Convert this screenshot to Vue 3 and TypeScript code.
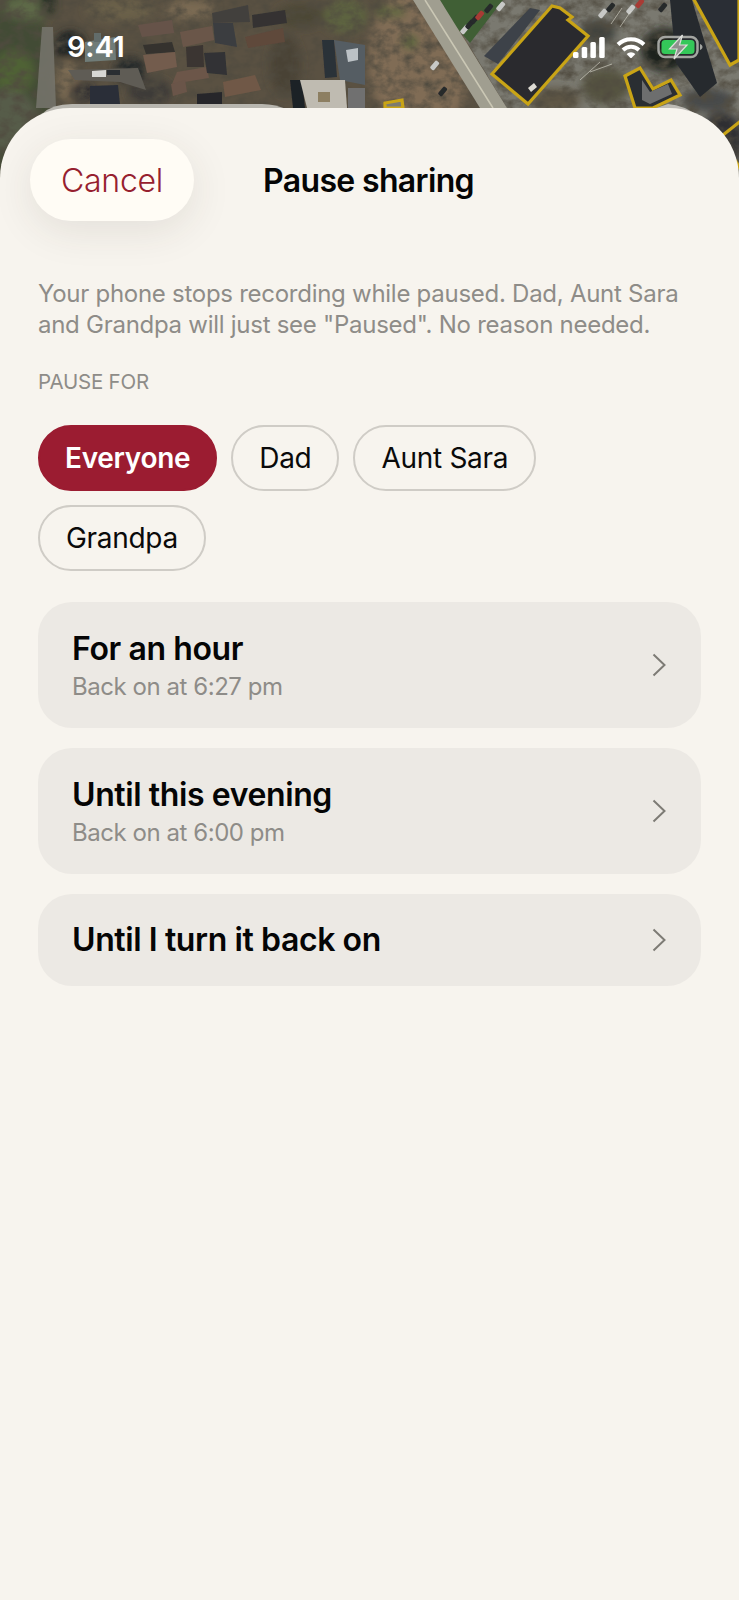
<script setup lang="ts">
/**
 * Pause sharing sheet on top of an aerial map
 */

interface Shape {
	points: string
	fill: string
}

interface Blob {
	x: number
	y: number
	rx: number
	ry: number
	fill: string
}

interface Option {
	title: string
	note?: string
}

// soft patches of trees, lawn and shadow
const blobs: Blob[] = [
	{ x: 18, y: 90, rx: 34, ry: 100, fill: '#434c36' },
	{ x: 30, y: 8, rx: 26, ry: 12, fill: '#5d6947' },
	{ x: 48, y: 2, rx: 8, ry: 14, fill: '#222a22' },
	{ x: 14, y: 72, rx: 20, ry: 22, fill: '#4f6236' },
	{ x: 8, y: 120, rx: 30, ry: 30, fill: '#565c48' },
	{ x: 70, y: 46, rx: 16, ry: 16, fill: '#1f2122' },
	{ x: 68, y: 80, rx: 12, ry: 22, fill: '#7a6a52' },
	{ x: 82, y: 92, rx: 12, ry: 9, fill: '#20222a' },
	{ x: 130, y: 70, rx: 16, ry: 14, fill: '#28292b' },
	{ x: 150, y: 92, rx: 22, ry: 14, fill: '#3c3a38' },
	{ x: 120, y: 10, rx: 34, ry: 12, fill: '#6a614a' },
	{ x: 190, y: 10, rx: 26, ry: 10, fill: '#7a6a52' },
	{ x: 345, y: 16, rx: 22, ry: 17, fill: '#5d6440' },
	{ x: 300, y: 16, rx: 24, ry: 12, fill: '#4c4636' },
	{ x: 285, y: 65, rx: 16, ry: 30, fill: '#4a4336' },
	{ x: 420, y: 60, rx: 52, ry: 75, fill: '#806c55' },
	{ x: 384, y: 12, rx: 7, ry: 6, fill: '#56653a' },
	{ x: 398, y: 12, rx: 7, ry: 5, fill: '#56653a' },
	{ x: 410, y: 42, rx: 8, ry: 7, fill: '#56653a' },
]

// the parking lot and the trees around it, also in soft patches
const lotPatches: Blob[] = [
	{ x: 598, y: 32, rx: 18, ry: 12, fill: '#3f423e' },
	{ x: 665, y: 50, rx: 24, ry: 22, fill: '#1f241c' },
	{ x: 606, y: 86, rx: 24, ry: 18, fill: '#55533f' },
	{ x: 555, y: 100, rx: 26, ry: 12, fill: '#5f5645' },
	{ x: 708, y: 100, rx: 26, ry: 12, fill: '#47484a' },
	{ x: 722, y: 140, rx: 22, ry: 28, fill: '#2d2f33' },
]

const roofs: Shape[] = [
	{ points: '85,42 115,37 116,60 85,62', fill: '#6f7c78' },
	{ points: '94,33 101,33 101,42 94,42', fill: '#626c6a' },
	{ points: '68,70 138,68 146,90 120,82 75,80', fill: '#5f5c55' },
	{ points: '92,71 106,70 106,77 92,77', fill: '#d7d7d4' },
	{ points: '107,70 120,70 120,75 107,75', fill: '#2c2e30' },
	{ points: '90,86 118,85 120,104 90,104', fill: '#2a2e37' },
	{ points: '138,25 172,20 174,33 142,37', fill: '#66534a' },
	{ points: '180,32 212,26 214,40 183,47', fill: '#6b564a' },
	{ points: '143,45 172,42 175,52 146,54', fill: '#34322f' },
	{ points: '143,55 175,52 177,67 147,73', fill: '#735b4d' },
	{ points: '177,72 207,67 209,78 172,84', fill: '#6c5649' },
	{ points: '171,84 185,80 187,92 173,96', fill: '#6b5548' },
	{ points: '223,82 255,75 261,90 225,97', fill: '#705846' },
	{ points: '245,37 283,28 285,42 248,48', fill: '#5e483b' },
	{ points: '212,13 248,5 250,22 213,23', fill: '#42403e' },
	{ points: '252,15 285,10 287,23 253,28', fill: '#343332' },
	{ points: '213,23 233,23 237,47 215,43', fill: '#3a3d40' },
	{ points: '186,47 203,45 204,67 187,67', fill: '#3b3531' },
	{ points: '204,53 225,52 227,75 207,73', fill: '#303234' },
	{ points: '197,94 222,92 222,108 197,108', fill: '#26282c' },
	{ points: '322,40 334,40 337,77 325,78', fill: '#2c3038' },
	{ points: '334,40 365,45 365,85 340,80', fill: '#555d63' },
	{ points: '346,50 358,48 358,60 348,62', fill: '#bcc2c6' },
	{ points: '290,80 302,80 305,108 293,108', fill: '#1f2226' },
	{ points: '300,80 345,80 347,108 307,108', fill: '#bfbbb1' },
	{ points: '318,92 330,92 330,102 318,102', fill: '#8d7f62' },
	{ points: '348,88 365,88 365,108 348,108', fill: '#6f6f70' },
]

const cars: [number, number, string][] = [
	[466, 24, '#c8c9c7'],
	[471, 19, '#26292c'],
	[476, 14, '#26292c'],
	[481, 10, '#a83a34'],
	[490, 3, '#26292c'],
	[502, 1, '#c8c9c7'],
	[604, 8, '#c8c9c7'],
	[612, 2, '#26292c'],
	[632, 4, '#c8c9c7'],
	[641, -2, '#a83a34'],
	[664, 2, '#26292c'],
	[436, 60, '#c8c9c7'],
	[444, 86, '#26292c'],
]

const options: Option[] = [
	{ title: 'For an hour', note: 'Back on at 6:27 pm' },
	{ title: 'Until this evening', note: 'Back on at 6:00 pm' },
	{ title: 'Until I turn it back on' },
]

const people = ['Everyone', 'Dad', 'Aunt Sara', 'Grandpa']
</script>

<template>
	<div class="page">
		<svg class="map" viewBox="0 0 739 190" preserveAspectRatio="none" aria-hidden="true">
			<defs>
				<filter id="grain" x="0" y="0" width="100%" height="100%">
					<feTurbulence type="fractalNoise" baseFrequency="0.08 0.1" numOctaves="4" seed="11" />
					<feColorMatrix type="matrix" values="0 0 0 0 0.08  0 0 0 0 0.07  0 0 0 0 0.05  1.900 0 0 0 -0.680" />
				</filter>
				<filter id="patch" x="-40%" y="-40%" width="180%" height="180%">
					<feGaussianBlur stdDeviation="4" />
				</filter>
				<filter id="soft" x="0" y="0" width="100%" height="100%">
					<feGaussianBlur stdDeviation="0.45" />
				</filter>
			</defs>
			<rect width="739" height="190" fill="#5a5142" />
			<g filter="url(#patch)">
				<ellipse
					v-for="b in blobs"
					:key="`${b.x}-${b.y}`"
					:cx="b.x"
					:cy="b.y"
					:rx="b.rx"
					:ry="b.ry"
					:fill="b.fill"
				/>
			</g>
			<polygon points="440,0 739,0 739,190 507,108 462,34" fill="#7a7970" />
			<g filter="url(#patch)">
				<ellipse
					v-for="b in lotPatches"
					:key="`${b.x}-${b.y}`"
					:cx="b.x"
					:cy="b.y"
					:rx="b.rx"
					:ry="b.ry"
					:fill="b.fill"
				/>
			</g>
			<rect width="739" height="190" filter="url(#grain)" />
			<polygon points="42,27 53,27 56,108 36,108" fill="#77756d" opacity="0.85" />
			<g filter="url(#soft)">
				<polygon points="440,0 503,0 470,43 450,20" fill="#3f5e35" />
				<polygon points="413,0 440,0 507,108 480,108" fill="#a09e90" />
				<line x1="425" y1="0" x2="493" y2="108" stroke="#cbc8b5" stroke-width="1.500" />
				<polygon points="484,56 530,8 540,10 498,64" fill="#3d4248" />
				<polygon v-for="r in roofs" :key="r.points" :points="r.points" :fill="r.fill" />
				<g v-for="c in cars" :key="`${c[0]}-${c[1]}`" :transform="`translate(${c[0]} ${c[1]}) rotate(40)`">
					<rect width="5" height="10" rx="1.500" :fill="c[2]" />
				</g>
				<g stroke="#dddbd0" stroke-width="1" opacity="0.6">
					<line x1="611" y1="24" x2="622" y2="8" />
					<line x1="620" y1="27" x2="631" y2="11" />
					<line x1="580" y1="80" x2="600" y2="62" />
					<line x1="590" y1="72" x2="612" y2="64" />
				</g>
				<g stroke="#c9a416" stroke-width="3.200" stroke-linejoin="miter">
					<polygon points="670,0 692,0 717,83 700,97 676,63" fill="#262a2f" stroke="none" />
					<polygon points="692,-4 739,-4 739,60 730,65" fill="#2b2f35" />
					<polygon points="492,74 552,6 560,8 572,17 568,20 588,36 528,104" fill="#2b2c2e" />
					<polygon points="625,76 640,68 653,89 671,80 680,95 653,108 635,108" fill="#2a2d33" />
					<polygon points="385,108 385,103 402,100 403,108" fill="#7c7a70" />
					<polyline points="723,135 742,120" fill="none" />
					<polyline points="735,160 742,172" fill="none" />
				</g>
				<polygon points="642,80 650,92 668,84 672,94 650,104 642,100" fill="#6d6e6e" />
				<polygon points="528,88 534,83 537,87 531,92" fill="#dedbd4" />
			</g>
			<path d="M42 114 Q52 104 72 104 L262 104 Q276 104 288 110 Z" fill="#b8b6af" />
			<path d="M650 110 L668 104 Q684 105 700 117 Z" fill="#bdbbb5" />
		</svg>

		<div class="status">
			<span class="time">9:41</span>
			<div class="status-icons">
				<svg width="32" height="21" viewBox="0 0 32 21" fill="#fff">
					<rect x="0" y="15" width="5.500" height="6" rx="1.500" />
					<rect x="8.700" y="10" width="5.500" height="11" rx="1.500" />
					<rect x="17.400" y="5" width="5.500" height="16" rx="1.500" />
					<rect x="26.200" y="0" width="5.500" height="21" rx="1.500" />
				</svg>
				<svg width="30" height="22" viewBox="0 0 30 22" fill="none">
					<path d="M2 8.500A18.500 18.500 0 0 1 28 8.500" stroke="#fff" stroke-width="4" />
					<path d="M7 14A11.500 11.500 0 0 1 23 14" stroke="#fff" stroke-width="4" />
					<path d="M10.600 18A6.500 6.500 0 0 1 19.400 18L15 22.500Z" fill="#fff" />
				</svg>
				<svg class="battery" width="46" height="26" viewBox="0 0 46 26" fill="none">
					<rect x="1.500" y="3" width="39" height="20" rx="6.500" stroke="#a3a5a1" stroke-width="2.500" />
					<rect x="4.500" y="6" width="33" height="14" rx="3.500" fill="#34c759" />
					<path d="M43 10v6c1.500-.5 2.500-1.600 2.500-3s-1-2.500-2.500-3Z" fill="#a3a5a1" />
					<path d="M25.500 1 12.500 15h7.500l-3 10L30 11h-7.500Z" fill="#8f918e" stroke="#dfe0dc" stroke-width="1.200" />
				</svg>
			</div>
		</div>

		<main class="sheet">
			<header class="sheet-head">
				<button type="button" class="cancel">Cancel</button>
				<h1>Pause sharing</h1>
			</header>

			<div class="body">
				<p class="intro">Your phone stops recording while paused. Dad, Aunt Sara and Grandpa will just see "Paused". No reason needed.</p>
				<h2 class="label">PAUSE FOR</h2>
				<div class="chips">
					<button
						v-for="(name, i) in people"
						:key="name"
						type="button"
						class="chip"
						:class="{ active: i === 0 }"
					>
						{{ name }}
					</button>
				</div>
				<div class="options">
					<button v-for="o in options" :key="o.title" type="button" class="option" :class="{ short: !o.note }">
						<span class="option-text">
							<span class="option-title">{{ o.title }}</span>
							<span v-if="o.note" class="option-note">{{ o.note }}</span>
						</span>
						<svg class="chevron" width="16" height="24" viewBox="0 0 16 24" fill="none">
							<path d="M2.500 1.500 13.500 12 2.500 22.500" stroke="#7d7b75" stroke-width="2" />
						</svg>
					</button>
				</div>
			</div>
		</main>
	</div>
</template>

<style>
html,
body {
	margin: 0;
	background: #f7f4ee;
}
</style>

<style scoped>
.page {
	position: relative;
	width: 739px;
	min-height: 1600px;
	display: flex;
	flex-direction: column;
	font-family: Inter, 'Noto Sans', sans-serif;
	overflow: hidden;
}

.map {
	position: absolute;
	top: 0;
	left: 0;
	width: 739px;
	height: 190px;
}

.status {
	position: relative;
	height: 108px;
	box-sizing: border-box;
	padding: 30px 36px 0 67px;
	display: flex;
	justify-content: space-between;
	align-items: flex-start;
	color: #fff;
}

.time {
	font-size: 29px;
	font-weight: 600;
	line-height: 34px;
	letter-spacing: -0.2px;
}

.status-icons {
	display: flex;
	align-items: center;
	gap: 11px;
	margin-top: 4px;
}

.sheet {
	position: relative;
	flex: 1;
	background: #f7f4ee;
	border-radius: 70px 70px 0 0;
}

.sheet-head {
	position: relative;
	height: 82px;
	margin-top: 31px;
	display: flex;
	align-items: center;
	justify-content: center;
}

.sheet-head h1 {
	margin: 0;
	font-size: 32px;
	font-weight: 600;
	letter-spacing: -0.65px;
	color: #050505;
	transform: translateX(-1px);
}

.cancel {
	position: absolute;
	left: 30px;
	top: 0;
	width: 164px;
	height: 82px;
	border: 0;
	border-radius: 41px;
	background: #fffcf5;
	box-shadow: 0 10px 40px rgb(60 50 40 / 0.1);
	font: 300 32px Inter, sans-serif;
	letter-spacing: -0.3px;
	color: #96202f;
}

.body {
	padding: 58px 38px 0;
}

.intro {
	margin: 0;
	font-size: 24px;
	line-height: 30.500px;
	letter-spacing: -0.27px;
	color: #8e8c88;
}

.label {
	margin: 30px 0 0;
	font-size: 20.500px;
	font-weight: 400;
	line-height: 24px;
	letter-spacing: -0.2px;
	color: #8e8c88;
}

.chips {
	margin-top: 31px;
	display: flex;
	flex-wrap: wrap;
	gap: 14px;
}

.chip {
	height: 66px;
	padding: 0 26px;
	border: 2px solid #cfccc6;
	border-radius: 33px;
	background: transparent;
	font: 400 28px Inter, sans-serif;
	letter-spacing: -0.3px;
	color: #0a0a0a;
}

.chip.active {
	padding: 0 25px;
	border-color: #9b1c31;
	background: #9b1c31;
	font-weight: 600;
	color: #fff;
}

.options {
	margin-top: 31px;
	display: flex;
	flex-direction: column;
	gap: 20px;
}

.option {
	height: 126px;
	padding: 0 34px;
	border: 0;
	border-radius: 34px;
	background: #ece9e4;
	display: flex;
	align-items: center;
	justify-content: space-between;
	text-align: left;
	font-family: inherit;
}

.option.short {
	height: 92px;
}

.option-text {
	display: flex;
	flex-direction: column;
	gap: 3px;
}

.option-title {
	font-size: 32px;
	font-weight: 600;
	line-height: 40px;
	letter-spacing: -0.4px;
	color: #050505;
}

.option-note {
	font-size: 24px;
	line-height: 30px;
	letter-spacing: -0.45px;
	color: #8e8c88;
}

.chevron {
	display: block;
}
</style>
